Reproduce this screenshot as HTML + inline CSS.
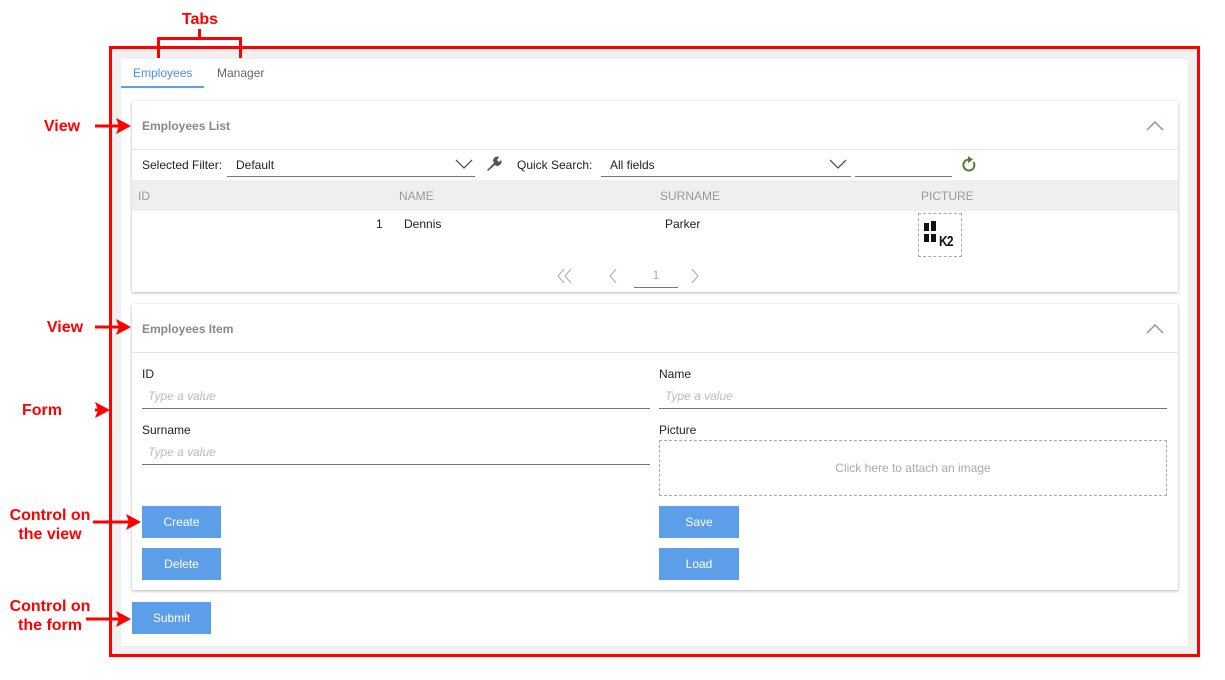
<!DOCTYPE html>
<html><head><meta charset="utf-8"><style>
*{box-sizing:border-box;margin:0;padding:0}
body{width:1225px;height:680px;background:#fff;font-family:"Liberation Sans",Arial,sans-serif;font-size:12px;color:#222;position:relative;overflow:hidden}
.a{position:absolute}
.red{color:#f00;font-weight:bold;font-size:16px;text-align:center;line-height:19px}
.card{position:absolute;background:#fff;box-shadow:0 1px 3px rgba(0,0,0,.3)}
.btn{position:absolute;background:#5d9ee8;color:#fff;text-align:center;line-height:32px;height:32px;width:79px}
.lbl{position:absolute;font-size:12px;color:#222}
.inp{position:absolute;border-bottom:1px solid #777;height:26px;font-style:italic;color:#bbb;padding:6px 6px;font-size:12px}
.hd{position:absolute;color:#999;font-size:12px}
</style></head><body>
<div class="a" style="left:109px;top:46px;width:1091px;height:611px;border:3px solid #f00;background:#f0f0f0"></div>
<div class="a" style="left:121px;top:59px;width:1067px;height:587px;background:#fff"></div>
<div class="a red" style="left:170px;top:10px;width:60px">Tabs</div>
<div class="a" style="left:157px;top:37px;width:85px;height:21px;border:3px solid #f00;border-bottom:none"></div>
<div class="a" style="left:198px;top:29px;width:3px;height:9px;background:#f00"></div>
<div class="a" style="left:133px;top:66px;color:#4a90e2">Employees</div>
<div class="a" style="left:121px;top:86px;width:83px;height:2px;background:#5d9ee8"></div>
<div class="a" style="left:217px;top:66px;color:#666">Manager</div>
<div class="a red" style="left:30px;top:117px;width:64px">View</div>
<div class="a red" style="left:33px;top:318px;width:64px">View</div>
<div class="a red" style="left:10px;top:401px;width:64px">Form</div>
<div class="a red" style="left:0;top:506px;width:100px">Control on<br>the view</div>
<div class="a red" style="left:0;top:597px;width:100px">Control on<br>the form</div>
<!-- card 1 -->
<div class="card" style="left:132px;top:101px;width:1046px;height:191px"></div>
<div class="a" style="left:142px;top:119px;color:#888;font-weight:bold">Employees List</div>
<svg class="a" style="left:1146px;top:120px" width="18" height="12"><polyline points="1,10 9,2 17,10" stroke="#8a96a8" stroke-width="1.5" fill="none"/></svg>
<div class="a" style="left:132px;top:149px;width:1046px;height:1px;background:#e3e3e3"></div>
<div class="a" style="left:142px;top:158px">Selected Filter:</div>
<div class="a" style="left:227px;top:152px;width:248px;height:25px;border-bottom:1px solid #777"></div>
<div class="a" style="left:236px;top:158px">Default</div>
<svg class="a" style="left:455px;top:158px" width="18" height="12"><polyline points="1,2 9,10 17,2" stroke="#555" stroke-width="1.3" fill="none"/></svg>
<svg class="a" style="left:485px;top:155px" width="18" height="18" viewBox="0 0 18 18"><path d="M2 15 L9 8 A4 4 0 0 1 14 2 L12 5 L14 7 L16 5 A4 4 0 0 1 10 10 L3 16 Z" fill="#555"/></svg>
<div class="a" style="left:517px;top:158px">Quick Search:</div>
<div class="a" style="left:601px;top:152px;width:250px;height:25px;border-bottom:1px solid #777"></div>
<div class="a" style="left:610px;top:158px">All fields</div>
<svg class="a" style="left:829px;top:158px" width="18" height="12"><polyline points="1,2 9,10 17,2" stroke="#555" stroke-width="1.3" fill="none"/></svg>
<div class="a" style="left:855px;top:152px;width:97px;height:25px;border-bottom:1px solid #777"></div>
<svg class="a" style="left:961px;top:156px" width="16" height="17" viewBox="0 0 16 17"><path d="M12.5 6 A5.5 5.5 0 1 1 8 3.5" stroke="#5a7a2a" stroke-width="2" fill="none"/><path d="M7 0 L12 3.5 L7 7 Z" fill="#5a7a2a"/></svg>
<div class="a" style="left:132px;top:180px;width:1046px;height:31px;background:#efefef"></div>
<div class="hd" style="left:138px;top:189px">ID</div>
<div class="hd" style="left:399px;top:189px">NAME</div>
<div class="hd" style="left:660px;top:189px">SURNAME</div>
<div class="hd" style="left:921px;top:189px">PICTURE</div>
<div class="a" style="left:376px;top:217px">1</div>
<div class="a" style="left:404px;top:217px">Dennis</div>
<div class="a" style="left:665px;top:217px">Parker</div>
<div class="a" style="left:918px;top:213px;width:44px;height:44px;border:1px dashed #aaa"></div>
<div class="a" style="left:924px;top:223px;width:5px;height:8px;background:#111"></div>
<div class="a" style="left:931px;top:221px;width:5px;height:10px;background:#111"></div>
<div class="a" style="left:924px;top:234px;width:5px;height:8px;background:#111"></div>
<div class="a" style="left:931px;top:234px;width:5px;height:8px;background:#111"></div>
<div class="a" style="left:939px;top:233px;font-weight:bold;font-size:15px;color:#111;letter-spacing:-1px;transform:scaleX(0.8);transform-origin:left">K2</div>
<svg class="a" style="left:556px;top:268px" width="18" height="16"><polyline points="8,1 2,8 8,15" stroke="#aaa" fill="none"/><polyline points="15,1 9,8 15,15" stroke="#aaa" fill="none"/></svg>
<svg class="a" style="left:608px;top:268px" width="10" height="16"><polyline points="8,1 2,8 8,15" stroke="#aaa" fill="none"/></svg>
<div class="a" style="left:634px;top:268px;width:44px;height:20px;border-bottom:1px solid #777;text-align:center;color:#aaa">1</div>
<svg class="a" style="left:690px;top:268px" width="10" height="16"><polyline points="2,1 8,8 2,15" stroke="#aaa" fill="none"/></svg>
<!-- card 2 -->
<div class="card" style="left:132px;top:304px;width:1046px;height:286px"></div>
<div class="a" style="left:142px;top:322px;color:#888;font-weight:bold">Employees Item</div>
<svg class="a" style="left:1146px;top:323px" width="18" height="12"><polyline points="1,10 9,2 17,10" stroke="#8a96a8" stroke-width="1.5" fill="none"/></svg>
<div class="a" style="left:132px;top:352px;width:1046px;height:1px;background:#e3e3e3"></div>
<div class="lbl" style="left:142px;top:367px">ID</div>
<div class="inp" style="left:142px;top:383px;width:508px">Type a value</div>
<div class="lbl" style="left:659px;top:367px">Name</div>
<div class="inp" style="left:659px;top:383px;width:508px">Type a value</div>
<div class="lbl" style="left:142px;top:423px">Surname</div>
<div class="inp" style="left:142px;top:439px;width:508px">Type a value</div>
<div class="lbl" style="left:659px;top:423px">Picture</div>
<div class="a" style="left:659px;top:440px;width:508px;height:56px;border:1px dashed #aaa;text-align:center;line-height:54px;color:#aaa">Click here to attach an image</div>
<div class="btn" style="left:142px;top:506px">Create</div>
<div class="btn" style="left:142px;top:548px">Delete</div>
<div class="btn" style="left:659px;top:506px;width:80px">Save</div>
<div class="btn" style="left:659px;top:548px;width:80px">Load</div>
<div class="btn" style="left:132px;top:602px">Submit</div>
<!-- annotation arrows on top -->
<svg class="a" style="left:0;top:0;z-index:5" width="150" height="680">
<g stroke="#f00" stroke-width="3" fill="none">
<line x1="95" y1="126" x2="122" y2="126"/>
<line x1="95" y1="327" x2="122" y2="327"/>
<line x1="95" y1="410" x2="102" y2="410"/>
<line x1="93" y1="522" x2="132" y2="522"/>
<line x1="86" y1="619" x2="122" y2="619"/>
</g>
<g fill="#f00">
<path d="M116 118 L131 126 L116 134 L119 126 Z"/>
<path d="M116 319 L131 327 L116 335 L119 327 Z"/>
<path d="M95 402 L110 410 L95 418 L98 410 Z"/>
<path d="M126 514 L141 522 L126 530 L129 522 Z"/>
<path d="M116 611 L131 619 L116 627 L119 619 Z"/>
</g></svg>
</body></html>
